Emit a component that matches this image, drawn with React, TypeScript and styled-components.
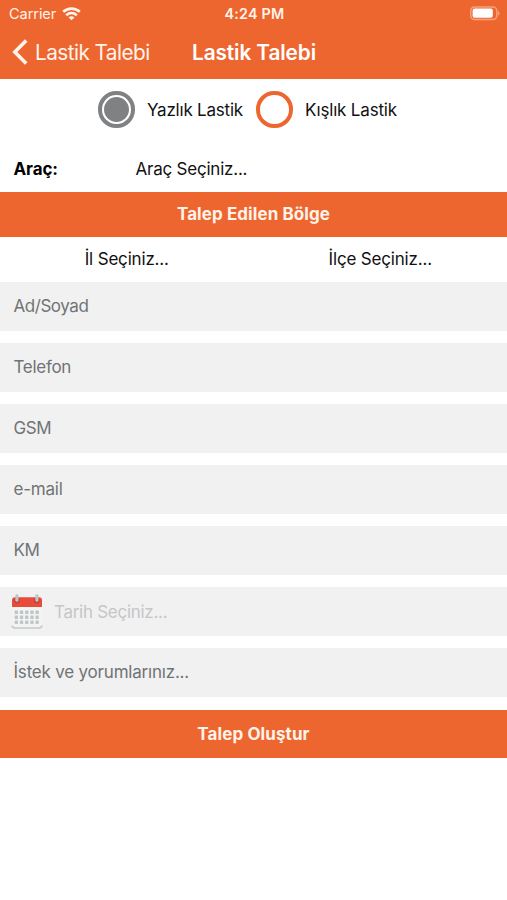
import React from 'react';
import styled, { createGlobalStyle } from 'styled-components';

const orange = '#ee662f';

const GlobalStyle = createGlobalStyle`
  * { box-sizing: border-box; }
  body { margin: 0; background: #fff; }
`;

const Screen = styled.main`
  display: flex;
  flex-direction: column;
  width: 507px;
  height: 900px;
  overflow: hidden;
  background: #fff;
  color: #111;
  font-family: Inter, 'Liberation Sans', sans-serif;
  font-size: 17px;
`;

const Label = styled.span<{ $spacing?: number }>`
  white-space: nowrap;
  letter-spacing: ${({ $spacing = 0 }) => $spacing}px;
`;

const Header = styled.header`
  height: 79px;
  flex: none;
  background: ${orange};
  color: #fff3ea;
`;

const StatusBar = styled.div`
  display: grid;
  grid-template-columns: 1fr auto 1fr;
  align-items: center;
  height: 27px;
  padding: 0 7px 0 9px;
  font-size: 14.6px;
`;

const Carrier = styled.div`
  display: flex;
  align-items: center;
  gap: 6px;
`;

const Clock = styled.div`
  font-size: 14.3px;
  font-weight: 600;
`;

const BatterySlot = styled.div`
  display: flex;
  justify-content: flex-end;
`;

const NavBar = styled.nav`
  display: flex;
  align-items: center;
  height: 50px;
  padding-left: 12px;
  font-size: 20.8px;
`;

const BackButton = styled.button`
  display: flex;
  align-items: center;
  gap: 7px;
  width: 180px;
  padding: 0;
  border: 0;
  background: none;
  color: inherit;
  font: inherit;
`;

const Title = styled.h1`
  margin: 0;
  color: #fff;
  font-size: 20.8px;
  font-weight: 600;
`;

const RadioGroup = styled.div`
  display: flex;
  align-items: center;
  height: 61px;
  flex: none;
  padding-left: 98px;
`;

const RadioOption = styled.label<{ $width: number }>`
  display: flex;
  align-items: center;
  gap: 12.5px;
  width: ${({ $width }) => $width}px;
`;

const RadioRing = styled.span<{ $checked?: boolean }>`
  flex: none;
  width: 36.5px;
  height: 36.5px;
  padding: 2px;
  border: 4px solid ${({ $checked }) => ($checked ? '#7f8183' : orange)};
  border-radius: 50%;
  background: ${({ $checked }) => ($checked ? '#7f8183' : '#fff')} content-box;
`;

const VehicleRow = styled.div`
  display: grid;
  grid-template-columns: 122px 1fr;
  align-items: center;
  height: 51.5px;
  flex: none;
  padding: 7px 0 0 13.5px;
`;

const Strong = styled.strong`
  color: #000;
  font-weight: 700;
`;

const Band = styled.div`
  display: flex;
  align-items: center;
  justify-content: center;
  height: 45px;
  flex: none;
  background: ${orange};
  color: #fff3ea;
  font-weight: 700;
`;

const RegionRow = styled.div`
  display: grid;
  grid-template-columns: 1fr 1fr;
  align-items: center;
  justify-items: center;
  height: 45.5px;
  flex: none;
`;

const Form = styled.form`
  display: flex;
  flex-direction: column;
  gap: 12.2px;
`;

const Field = styled.div<{ $faint?: boolean }>`
  display: flex;
  align-items: center;
  gap: 11px;
  height: 48.9px;
  padding-bottom: ${({ $faint }) => ($faint ? 0 : 1)}px;
  padding-left: ${({ $faint }) => ($faint ? 11 : 13.5)}px;
  background: #f1f1f1;
  color: ${({ $faint }) => ($faint ? '#c6c6c8' : '#707375')};
`;

const SubmitButton = styled.button`
  height: 48.8px;
  padding: 0;
  border: 0;
  background: ${orange};
  color: #fff3ea;
  font: inherit;
  font-weight: 700;
`;

const WifiIcon = () => (
  <svg width="19" height="14" viewBox="0 0 19 14" fill="none" stroke="#fff3ea" strokeWidth="2.7">
    <path d="M1.2 4.8C6 .5 13 .5 17.8 4.8" />
    <path d="M4.2 8.2c3.2-2.7 7.4-2.7 10.6 0" />
    <path d="M9.5 13.3 6.6 10.4c1.7-1.5 4.1-1.5 5.8 0z" fill="#fff3ea" stroke="none" />
  </svg>
);

const BatteryIcon = () => (
  <svg width="30" height="15" viewBox="0 0 30 15">
    <rect x="0.8" y="0.9" width="26" height="12.6" rx="3.8" fill="none" stroke="#f5a27c" strokeWidth="1.5" />
    <rect x="2.6" y="2.6" width="20.2" height="9.2" rx="2" fill="#fff" />
    <path d="M28 5v4.6c2-.7 2-3.9 0-4.6z" fill="#f5a078" />
  </svg>
);

const BackIcon = () => (
  <svg width="16" height="26" viewBox="0 0 16 26" fill="none" stroke="#fff3ea" strokeWidth="3.6">
    <path d="M14.2 1.5 2.8 13l11.4 11.5" />
  </svg>
);

const columns = [5.2, 10.4, 15.6, 20.8, 26];
const rows = [18.2, 23.1, 28];

const CalendarIcon = () => (
  <svg width="32" height="36" viewBox="0 0 32 36">
    <path d="M1 12h30v19a3 3 0 0 1-3 3H4a3 3 0 0 1-3-3z" fill="#f2f3f3" />
    <path d="M1 31.5C1.4 33.4 2.5 34 4.5 34h23c2 0 3.1-.6 3.5-2.5" fill="none" stroke="#c5c9ca" strokeWidth="1.6" />
    <path d="M1 13V6.2a3 3 0 0 1 3-3h24a3 3 0 0 1 3 3V13z" fill="#e94b3b" />
    {[5.8, 25.8].map((x) => (
      <g key={x}>
        <circle cx={x} cy="6.5" r="2.8" fill="#c43d32" />
        <rect x={x - 1.5} y="0.3" width="3.2" height="7.5" rx="1.5" fill="#bdc3c4" />
      </g>
    ))}
    {rows.map((y) =>
      columns.map((x) => (
        <rect key={`${x}-${y}`} x={x - 1.5} y={y - 1.6} width="3.3" height="3.5" rx="0.6" fill="#c0c5c7" />
      )),
    )}
  </svg>
);

const fields = [
  { text: 'Ad/Soyad', spacing: -0.45 },
  { text: 'Telefon', spacing: -0.3 },
  { text: 'GSM', spacing: -0.4 },
  { text: 'e-mail', spacing: -0.2 },
  { text: 'KM', spacing: -0.5 },
];

export default function App() {
  return (
    <>
      <GlobalStyle />
      <Screen>
        <Header>
          <StatusBar>
            <Carrier>
              <Label $spacing={-0.1}>Carrier</Label>
              <WifiIcon />
            </Carrier>
            <Clock>
              <Label $spacing={0.25}>4:24 PM</Label>
            </Clock>
            <BatterySlot>
              <BatteryIcon />
            </BatterySlot>
          </StatusBar>
          <NavBar>
            <BackButton>
              <BackIcon />
              <Label $spacing={-0.57}>Lastik Talebi</Label>
            </BackButton>
            <Title>
              <Label $spacing={-0.1}>Lastik Talebi</Label>
            </Title>
          </NavBar>
        </Header>
        <RadioGroup>
          <RadioOption $width={158}>
            <RadioRing $checked />
            <Label $spacing={-0.22}>Yazlık Lastik</Label>
          </RadioOption>
          <RadioOption $width={150}>
            <RadioRing />
            <Label $spacing={-0.18}>Kışlık Lastik</Label>
          </RadioOption>
        </RadioGroup>
        <VehicleRow>
          <Strong>
            <Label $spacing={-0.1}>Araç:</Label>
          </Strong>
          <Label $spacing={-0.22}>Araç Seçiniz...</Label>
        </VehicleRow>
        <Band>
          <Label $spacing={0.08}>Talep Edilen Bölge</Label>
        </Band>
        <RegionRow>
          <Label $spacing={-0.18}>İl Seçiniz...</Label>
          <Label $spacing={-0.18}>İlçe Seçiniz...</Label>
        </RegionRow>
        <Form>
          {fields.map(({ text, spacing }) => (
            <Field key={text}>
              <Label $spacing={spacing}>{text}</Label>
            </Field>
          ))}
          <Field $faint>
            <CalendarIcon />
            <Label $spacing={-0.28}>Tarih Seçiniz...</Label>
          </Field>
          <Field>
            <Label $spacing={-0.2}>İstek ve yorumlarınız...</Label>
          </Field>
          <SubmitButton type="button">
            <Label $spacing={0.1}>Talep Oluştur</Label>
          </SubmitButton>
        </Form>
      </Screen>
    </>
  );
}
